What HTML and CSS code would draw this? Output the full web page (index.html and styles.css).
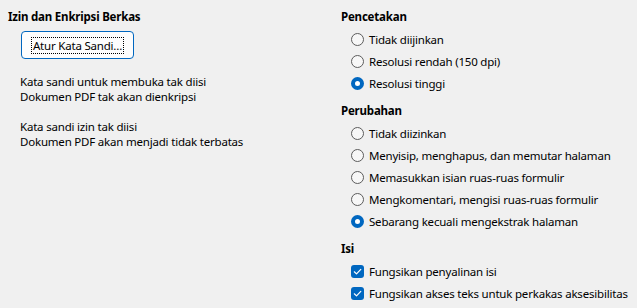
FILE: index.html
```html
<!DOCTYPE html>
<html lang="id">
<head>
    <meta charset="UTF-8">
    <title>Izin dan Enkripsi Berkas</title>
    <link rel="stylesheet" href="styles.css">
</head>
<body>
    <div class="dialog">
        <section class="col kiri">
            <div class="judul">Izin dan Enkripsi Berkas</div>
            <button class="tombol"><span class="fokus">Atur Kata Sandi...</span></button>
            <p class="catatan">Kata sandi untuk membuka tak diisi<br>Dokumen PDF tak akan dienkripsi</p>
            <p class="catatan">Kata sandi izin tak diisi<br>Dokumen PDF akan menjadi tidak terbatas</p>
        </section>

        <section class="col kanan">
            <div class="grup">
                <div class="judul">Pencetakan</div>
                <div class="opsi"><span class="radio"></span>Tidak diijinkan</div>
                <div class="opsi"><span class="radio"></span>Resolusi rendah (150 dpi)</div>
                <div class="opsi"><span class="radio aktif"></span>Resolusi tinggi</div>
            </div>
            <div class="grup">
                <div class="judul">Perubahan</div>
                <div class="opsi"><span class="radio"></span>Tidak diizinkan</div>
                <div class="opsi"><span class="radio"></span>Menyisip, menghapus, dan memutar halaman</div>
                <div class="opsi"><span class="radio"></span>Memasukkan isian ruas-ruas formulir</div>
                <div class="opsi"><span class="radio"></span>Mengkomentari, mengisi ruas-ruas formulir</div>
                <div class="opsi"><span class="radio aktif"></span>Sebarang kecuali mengekstrak halaman</div>
            </div>
            <div class="grup">
                <div class="judul">Isi</div>
                <div class="opsi">
                    <span class="centang"><svg viewBox="0 0 13 13" width="13" height="13"><path d="M3.3 6.8 L5.5 8.9 L9.8 4.4" fill="none" stroke="#fff" stroke-width="1.2" stroke-linecap="round" stroke-linejoin="round"/></svg></span>Fungsikan penyalinan isi
                </div>
                <div class="opsi">
                    <span class="centang"><svg viewBox="0 0 13 13" width="13" height="13"><path d="M3.3 6.8 L5.5 8.9 L9.8 4.4" fill="none" stroke="#fff" stroke-width="1.2" stroke-linecap="round" stroke-linejoin="round"/></svg></span>Fungsikan akses teks untuk perkakas aksesibilitas
                </div>
            </div>
        </section>
    </div>
</body>
</html>
```

FILE: styles.css
```css
body {
    margin: 0;
    background-color: #f0f0f0;
    font-family: "Noto Sans", sans-serif;
    font-size: 11.5px;
    letter-spacing: -0.2px;
    color: #000;
}

.dialog {
    display: flex;
    height: 308px;
    white-space: nowrap;
}

.col {
    padding-top: 6px;
    box-sizing: border-box;
}
.kiri {
    width: 341px;
    padding-left: 8px;
}

/* judul bagian dalam huruf tebal */
.judul {
    font-weight: 700;
    line-height: 22px;
    height: 22px;
}

/****** BAGIAN KIRI ******/
.tombol {
    display: block;
    margin: 3px 0 0 13px;
    width: 113px;
    height: 28px;
    padding: 0;
    font: inherit;
    letter-spacing: inherit;
    color: #000;
    background-color: #fdfdfd;
    border: 1px solid #0067c0;
    border-radius: 4px;
}
.fokus {
    display: inline-block;
    line-height: 15px;
    padding: 0 1px;
    outline: 1px dotted #000;
}
.catatan {
    margin: 15px 0 0 12px;
    line-height: 15px;
}
.catatan + .catatan {
    margin-top: 15px;
}

/****** BAGIAN KANAN ******/
.grup + .grup {
    margin-top: 6px;
}
.opsi {
    display: flex;
    align-items: center;
    height: 22px;
    padding-left: 10px;
}
.radio {
    flex: none;
    width: 13px;
    height: 13px;
    box-sizing: border-box;
    margin-right: 5px;
    border: 1px solid #5c5c5c;
    border-radius: 50%;
    background-color: #f7f7f7;
}
.radio.aktif {
    border: 4px solid #0067c0;
    background-color: #fff;
}
.centang {
    flex: none;
    width: 13px;
    height: 13px;
    margin-right: 5px;
    border-radius: 3px;
    background-color: #0067c0;
}
.centang svg {
    display: block;
}
```
